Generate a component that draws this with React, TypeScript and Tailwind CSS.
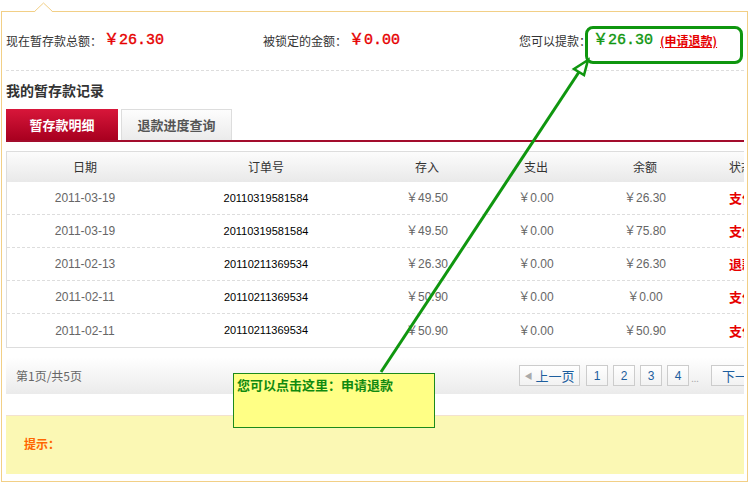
import React from "react";

const rows = [
  ["2011-03-19", "20110319581584", "￥49.50", "￥0.00", "￥26.30", "支付成功"],
  ["2011-03-19", "20110319581584", "￥49.50", "￥0.00", "￥75.80", "支付成功"],
  ["2011-02-13", "20110211369534", "￥26.30", "￥0.00", "￥26.30", "退款成功"],
  ["2011-02-11", "20110211369534", "￥50.90", "￥0.00", "￥0.00", "支付成功"],
  ["2011-02-11", "20110211369534", "￥50.90", "￥0.00", "￥50.90", "支付成功"],
];

const cols = "grid grid-cols-[156px_206px_116px_102px_116px_104px]";

export default function App() {
  return (
    <div className="relative w-[750px] h-[487px] overflow-hidden bg-white font-['Noto_Sans_CJK_SC',sans-serif] text-[12px] text-[#333]">
      <div className="ml-[1px] mt-[11px] w-[747px] h-[471px] border border-[#f2cf86] pl-[4px] pr-[2px] pt-[14px]">
        <div className="w-[738px] overflow-hidden">
          {/* summary row */}
          <div className="flex h-[38px] items-start">
            <div className="flex w-[257px] h-[30px] items-center whitespace-nowrap">
              <span>现在暂存款总额：</span>
              <span className="ml-[2px] text-[15px] text-[#e60000] [-webkit-text-stroke:0.4px_#e60000] font-['Liberation_Mono','Noto_Sans_CJK_SC',monospace]">￥26.30</span>
            </div>
            <div className="flex w-[256px] h-[30px] items-center whitespace-nowrap">
              <span>被锁定的金额：</span>
              <span className="ml-[2px] text-[15px] text-[#e60000] [-webkit-text-stroke:0.4px_#e60000] font-['Liberation_Mono','Noto_Sans_CJK_SC',monospace]">￥0.00</span>
            </div>
            <div className="flex items-start">
              <span className="flex w-[66px] h-[30px] items-center whitespace-nowrap">您可以提款：</span>
              <div className="h-[38px] w-[158px] rounded-[8px] border-[3px] border-[#0f960f] pl-[5px]">
                <div className="flex h-[24px] items-center whitespace-nowrap">
                  <span className="text-[15px] text-[#0f960f] [-webkit-text-stroke:0.4px_#0f960f] font-['Liberation_Mono','Noto_Sans_CJK_SC',monospace]">￥26.30</span>
                  <a className="ml-[7px] text-[12px] font-bold text-[#e60000] underline">(申请退款)</a>
                </div>
              </div>
            </div>
          </div>

          <div className="mt-[6px] border-t border-dashed border-[#dddddd]" />

          <div className="mt-[9px] h-[20px] text-[14px] font-bold leading-[20px] text-[#333]">我的暂存款记录</div>

          {/* tabs */}
          <div className="mt-[9px] flex h-[31px] items-end">
            <div className="flex h-[31px] w-[112px] items-center justify-center bg-gradient-to-b from-[#d8163a] to-[#a8001f] text-[13px] font-bold text-white">
              暂存款明细
            </div>
            <div className="ml-[3px] flex h-[31px] w-[111px] items-center justify-center border border-b-0 border-[#dddddd] bg-gradient-to-b from-[#fdfdfd] to-[#ebebeb] text-[13px] font-bold text-[#555]">
              退款进度查询
            </div>
          </div>
          <div className="h-[2px] bg-[#a30d2d]" />

          {/* table */}
          <div className="mt-[9px] w-[820px] border border-[#dddddd]">
            <div className={`${cols} h-[30px] items-center bg-gradient-to-b from-[#fcfcfc] to-[#e9e9e9] text-center text-[12px] text-[#333]`}>
              <div>日期</div>
              <div>订单号</div>
              <div>存入</div>
              <div>支出</div>
              <div>余额</div>
              <div className="pl-[26px] text-left">状态</div>
            </div>
            {rows.map((r, i) => (
              <div
                key={i}
                className={`${cols} h-[33px] items-center text-center ${i < rows.length - 1 ? "border-b border-dashed border-[#dddddd]" : ""}`}
              >
                <div className="font-['Liberation_Sans','Noto_Sans_CJK_SC',sans-serif] text-[12px] text-[#666]">{r[0]}</div>
                <div className="font-['Liberation_Sans','Noto_Sans_CJK_SC',sans-serif] text-[11px] text-black">{r[1]}</div>
                <div className="font-['Liberation_Sans','Noto_Sans_CJK_SC',sans-serif] text-[12px] text-[#666]">{r[2]}</div>
                <div className="font-['Liberation_Sans','Noto_Sans_CJK_SC',sans-serif] text-[12px] text-[#666]">{r[3]}</div>
                <div className="font-['Liberation_Sans','Noto_Sans_CJK_SC',sans-serif] text-[12px] text-[#666]">{r[4]}</div>
                <div className="pl-[26px] text-left text-[13px] font-bold text-[#e60000]">{r[5]}</div>
              </div>
            ))}
          </div>

          {/* pagination */}
          <div className="mt-[9px] flex h-[37px] w-[820px] items-center bg-gradient-to-b from-[#ffffff] to-[#ebebeb] text-[12px]">
            <div className="w-[513px] pl-[10px] text-[#666]">第1页/共5页</div>
            <div className="flex h-[21px] w-[61px] items-center justify-center border border-[#cccccc] bg-gradient-to-b from-white to-[#f2f2f2] text-[13px] text-[#1d5e9e]">
              <span className="mr-[3px] text-[8px] text-[#aaa]">◀</span>上一页
            </div>
            {["1", "2", "3", "4"].map((n, i) => (
              <div
                key={n}
                className={`flex h-[21px] w-[22px] items-center justify-center border border-[#cccccc] bg-gradient-to-b from-white to-[#f2f2f2] font-['Liberation_Sans',sans-serif] text-[12px] text-[#1d5e9e] ${i === 0 ? "ml-[6px]" : "ml-[5px]"}`}
              >
                {n}
              </div>
            ))}
            <div className="flex h-[21px] w-[12px] items-end justify-center pb-[3px] text-[9px] leading-none text-[#aaa]">...</div>
            <div className="ml-[10px] flex h-[21px] w-[61px] items-center justify-center border border-[#cccccc] bg-gradient-to-b from-white to-[#f2f2f2] text-[13px] text-[#1d5e9e]">
              下一页
            </div>
          </div>

          {/* tip */}
          <div className="mt-[21px] h-[59px] border-t border-[#f3e2cf] bg-[#fbf8b4] pl-[18px] pt-[19px]">
            <span className="text-[12px] font-bold text-[#ff6600]">提示：</span>
          </div>
        </div>
      </div>

      {/* notch */}
      <svg className="absolute left-[34px] top-[2px]" width="20" height="12" viewBox="0 0 20 12">
        <polygon points="0,10.6 9.5,1 19,10.6" fill="#ffffff" />
        <polyline points="0.5,9.5 9.5,1 18.5,9.5" fill="none" stroke="#f2cf86" strokeWidth="1" />
      </svg>

      {/* callout */}
      <div className="absolute left-[233px] top-[373px] h-[55px] w-[202px] border border-[#1c8a1c] bg-[#ffff85] px-[3px] pt-[2px]">
        <span className="text-[13px] font-bold leading-[17px] text-[#108a10]">您可以点击这里：申请退款</span>
      </div>

      {/* arrow */}
      <svg className="pointer-events-none absolute left-0 top-0" width="750" height="487" viewBox="0 0 750 487">
        <line x1="381" y1="372" x2="579" y2="72" stroke="#0f960f" strokeWidth="3" />
        <polygon points="588,60 574,69 584,75" fill="#ffffff" stroke="#0f960f" strokeWidth="2.5" strokeLinejoin="miter" />
      </svg>
    </div>
  );
}
